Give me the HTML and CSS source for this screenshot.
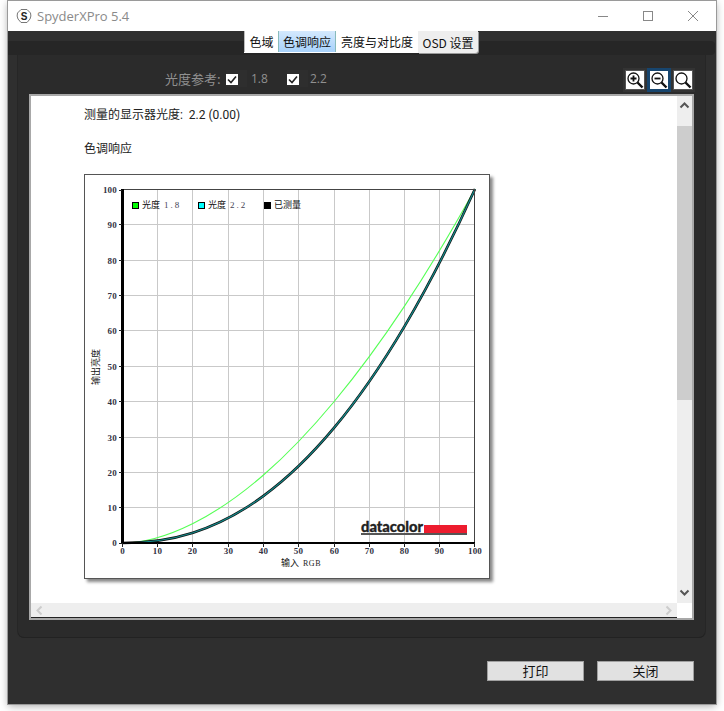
FILE: index.html
```html
<!DOCTYPE html>
<html lang="zh">
<head>
<meta charset="utf-8">
<title>SpyderXPro 5.4</title>
<link rel="stylesheet" href="styles.css">
</head>
<body>
<div class="window">
  <header class="titlebar">
    <svg class="app-icon" width="16" height="16" viewBox="0 0 16 16"><path d="M5 1.500h6l3.500 3.500q1 3-.5 6l-3 3.500H5l-3-3.500q-1.500-3-.5-6z" fill="none" stroke="#777" stroke-width="1"/><text x="8" y="12" class="app-s">S</text></svg>
    <span class="app-title">SpyderXPro 5.4</span>
    <div class="win-controls">
      <svg width="12" height="12" viewBox="0 0 12 12"><path d="M1 6.500h10" stroke="#888" stroke-width="1"/></svg>
      <svg width="12" height="12" viewBox="0 0 12 12"><rect x="1.500" y="1.500" width="9" height="9" fill="none" stroke="#888"/></svg>
      <svg width="12" height="12" viewBox="0 0 12 12"><path d="M1 1l10 10M11 1L1 11" stroke="#888" stroke-width="1" fill="none"/></svg>
    </div>
  </header>

  <div class="tabstrip">
    <nav class="tabs">
      <span class="tab">色域</span>
      <span class="tab tab-active">色调响应</span>
      <span class="tab">亮度与对比度</span>
      <span class="tab tab-last">OSD 设置</span>
    </nav>
  </div>

  <main class="panel">
    <div class="toolrow">
      <div class="gamma-refs">
        <span class="gamma-label">光度参考:</span>
        <span class="check"><svg width="12" height="11" viewBox="0 0 12 11"><rect width="12" height="11" fill="#fff"/><path d="M2 5.500l3 3 5-6" fill="none" stroke="#222" stroke-width="1.600"/></svg></span>
        <span class="gamma-value">1.8</span>
        <span class="check"><svg width="12" height="11" viewBox="0 0 12 11"><rect width="12" height="11" fill="#fff"/><path d="M2 5.500l3 3 5-6" fill="none" stroke="#222" stroke-width="1.600"/></svg></span>
        <span class="gamma-value">2.2</span>
      </div>
      <div class="zoom-tools">
        <span class="zoom-btn"><svg width="18" height="18" viewBox="0 0 18 18"><circle cx="7.500" cy="7.500" r="5.500" fill="none" stroke="#111" stroke-width="1.300"/><path d="M11.500 11.500l5 5" stroke="#111" stroke-width="2.400"/><path d="M4.500 7.500h6M7.500 4.500v6" stroke="#111" stroke-width="1.800"/></svg></span>
        <span class="zoom-btn zoom-btn-on"><svg width="18" height="18" viewBox="0 0 18 18"><circle cx="7.500" cy="7.500" r="5.500" fill="none" stroke="#111" stroke-width="1.300"/><path d="M11.500 11.500l5 5" stroke="#111" stroke-width="2.400"/><path d="M4.500 7.500h6" stroke="#111" stroke-width="1.800"/></svg></span>
        <span class="zoom-btn"><svg width="18" height="18" viewBox="0 0 18 18"><circle cx="7.500" cy="7.500" r="5.500" fill="none" stroke="#111" stroke-width="1.300"/><path d="M11.500 11.500l5 5" stroke="#111" stroke-width="2.400"/></svg></span>
      </div>
    </div>

    <section class="viewer">
      <div class="report">
        <p class="report-line">测量的显示器光度:&nbsp; 2.2 (0.00)</p>
        <p class="report-line report-heading">色调响应</p>
        <div class="chart-card">
          <svg class="chart" width="404" height="403" viewBox="85 175 404 403">
            <g class="grid">
              <path d="M157.500 190V543M192.500 190V543M228.500 190V543M263.500 190V543M298.500 190V543M334.500 190V543M369.500 190V543M404.500 190V543M439.500 190V543"/>
              <path d="M122 224.500H475M122 260.500H475M122 295.500H475M122 330.500H475M122 366.500H475M122 401.500H475M122 437.500H475M122 472.500H475M122 507.500H475"/>
            </g>
            <g class="logo">
              <text x="361" y="532" class="logo-text" textLength="62" lengthAdjust="spacingAndGlyphs">datacolor</text>
              <rect x="424" y="525" width="43" height="8" fill="#ed1c2e"/>
              <rect x="361" y="533" width="106" height="2" fill="#555"/>
            </g>
            <g transform="translate(122.500 543) scale(3.525 -3.54)">
              <path class="c-18" d="M0 0C6.670 0 13.330 2.210 20 5.520C26.670 8.830 33.330 13.440 40 19.200C46.670 24.960 53.330 31.920 60 39.900C66.670 47.880 73.330 56.860 80 66.900C86.670 76.940 93.330 88 100 100"/>
              <path class="c-meas" d="M0 0C6.670 0 13.330 .77 20 2.900C26.670 5.030 33.330 8.410 40 13.300C46.670 18.190 53.330 24.550 60 32.500C66.670 40.450 73.330 49.970 80 61.200C86.670 72.430 93.330 85.330 100 100"/>
              <path class="c-22" d="M0 0C6.670 0 13.330 .77 20 2.900C26.670 5.030 33.330 8.410 40 13.300C46.670 18.190 53.330 24.550 60 32.500C66.670 40.450 73.330 49.970 80 61.200C86.670 72.430 93.330 85.330 100 100"/>
            </g>
            <g class="axes">
              <path class="ax-thin" d="M122 189.500H475M474.500 189V543"/>
              <path class="ax-thick-v" d="M122.500 189V544"/>
              <path class="ax-thick-h" d="M122 543H475"/>
              <path class="ticks" d="M119 190.500h3M119 224.500h3M119 260.500h3M119 295.500h3M119 330.500h3M119 366.500h3M119 401.500h3M119 437.500h3M119 472.500h3M119 507.500h3M119 543.500h3M122.500 543v4M157.500 543v4M192.500 543v4M228.500 543v4M263.500 543v4M298.500 543v4M334.500 543v4M369.500 543v4M404.500 543v4M439.500 543v4M474.500 543v4"/>
            </g>
            <g class="ylab">
              <text x="117" y="193">100</text><text x="117" y="228">90</text><text x="117" y="264">80</text><text x="117" y="299">70</text><text x="117" y="334">60</text><text x="117" y="370">50</text><text x="117" y="405">40</text><text x="117" y="441">30</text><text x="117" y="476">20</text><text x="117" y="511">10</text><text x="117" y="546">0</text>
            </g>
            <g class="xlab">
              <text x="122.500" y="554">0</text><text x="157.500" y="554">10</text><text x="192.500" y="554">20</text><text x="228.500" y="554">30</text><text x="263.500" y="554">40</text><text x="298.500" y="554">50</text><text x="334.500" y="554">60</text><text x="369.500" y="554">70</text><text x="404.500" y="554">80</text><text x="439.500" y="554">90</text><text x="475" y="554">100</text>
            </g>
            <g class="legend">
              <rect x="132.500" y="202.500" width="6" height="6" fill="#0f0" stroke="#000"/>
              <text x="142" y="208">光度<tspan class="lg-num" dx="4">1.8</tspan></text>
              <rect x="198.500" y="202.500" width="6" height="6" fill="#0ff" stroke="#000"/>
              <text x="208" y="208">光度<tspan class="lg-num" dx="4">2.2</tspan></text>
              <rect x="264.500" y="202.500" width="6" height="6" fill="#000" stroke="#000"/>
              <text x="274" y="208">已测量</text>
            </g>
            <text class="axis-title" x="281" y="566">输入<tspan class="rgb" dx="4">RGB</tspan></text>
            <text class="axis-title" transform="translate(99 385) rotate(-90)">输出亮度</text>
          </svg>
        </div>
      </div>
      <div class="vscroll">
        <svg class="chev" width="15" height="30" viewBox="0 0 15 30"><path d="M3.500 11.500l4-4 4 4" fill="none" stroke="#555" stroke-width="2"/></svg>
        <div class="vthumb"></div>
        <div class="vtrack"></div>
        <svg class="chev" width="15" height="18" viewBox="0 0 15 18"><path d="M3.500 5.500l4 4 4-4" fill="none" stroke="#555" stroke-width="2"/></svg>
      </div>
      <div class="hscroll">
        <svg width="15" height="15" viewBox="0 0 15 15"><path d="M9.500 3.500l-4 4 4 4" fill="none" stroke="#ccc" stroke-width="2"/></svg>
        <svg width="15" height="15" viewBox="0 0 15 15"><path d="M5.500 3.500l4 4-4 4" fill="none" stroke="#ccc" stroke-width="2"/></svg>
      </div>
      <div class="corner"></div>
    </section>
  </main>

  <footer class="actions">
    <button class="btn" type="button">打印</button>
    <button class="btn" type="button">关闭</button>
  </footer>
</div>
</body>
</html>
```

FILE: styles.css
```css
html, body { margin: 0; padding: 0; }
body {
  width: 724px;
  height: 711px;
  background: #fff;
  padding: 1px 0 0 8px;
  box-sizing: border-box;
  overflow: hidden;
  font-family: "Noto Sans CJK SC", "Liberation Sans", sans-serif;
}
.window {
  width: 708px;
  height: 703px;
  display: flex;
  flex-direction: column;
  background: #2f2f2f;
  box-shadow: 0 0 0 1px #9a9a9a, 0 2px 8px rgba(0,0,0,.35);
}
.titlebar {
  height: 30px;
  flex: none;
  display: flex;
  align-items: center;
  background: #fff;
  padding-left: 8px;
}
.app-icon { flex: none; margin-right: 5px; }
.app-s { font: bold 10px "Liberation Sans", sans-serif; fill: #222; text-anchor: middle; }
.app-title { font: 13px "Open Sans", sans-serif; color: #8a8a8a; }
.win-controls {
  margin-left: auto;
  display: flex;
  gap: 33px;
  padding-right: 17px;
}
.tabstrip {
  position: relative;
  height: 24px;
  flex: none;
}
.tabstrip::before {
  content: "";
  position: absolute;
  left: 0;
  right: 1px;
  top: 10px;
  height: 14px;
  background: #262626;
  border-radius: 0 4px 4px 0;
}
.tabs {
  position: relative;
  display: flex;
  margin-left: 236px;
  height: 22px;
  width: 234px;
  border-bottom: 2px solid #fff;
  box-sizing: border-box;
}
.tab {
  display: flex;
  align-items: center;
  justify-content: center;
  box-sizing: border-box;
  background: #fff;
  font-size: 12px;
  color: #111;
  white-space: nowrap;
  height: 21px;
  flex: none;
}
.tab:nth-child(1) { width: 34px; border-left: 1px solid #bbb; }
.tab-active { width: 58px; background: linear-gradient(#d4e9fd, #a8d2fb); border-left: 1px solid #8bb; border-right: 1px solid #8bb; }
.tab:nth-child(3) { width: 82px; }
.tab-last { width: 60px; background: #eee; border-radius: 0 0 3px 0; box-shadow: 1px 1px 0 #999; height: 22px; margin-bottom: -2px; }
.panel {
  margin: 0 11px 0 10px;
  height: 582px;
  flex: none;
  box-sizing: border-box;
  padding: 13px 11px 17px;
  background: #2b2b2b;
  border-radius: 0 0 6px 6px;
  box-shadow: 0 1px 0 #222, 0 0 0 1px #262626;
  display: flex;
  flex-direction: column;
}
.toolrow {
  height: 26px;
  flex: none;
  display: flex;
  align-items: flex-start;
  justify-content: space-between;
}
.gamma-refs {
  display: flex;
  align-items: center;
  height: 20px;
  padding-left: 136px;
  color: #909090;
  font-size: 13px;
}
.gamma-label { width: 61px; flex: none; white-space: nowrap; }
.check {
  width: 21px;
  height: 17px;
  flex: none;
  background: #2e2e2e;
  display: flex;
  padding: 4px 0 0 0;
  box-sizing: border-box;
}
.check svg { display: block; }
.gamma-value { font: 12px "Open Sans", sans-serif; width: 40px; padding-left: 4px; box-sizing: border-box; flex: none; }
.gamma-value:last-child { width: auto; padding-left: 2px; }
.zoom-tools {
  display: flex;
  align-items: center;
  gap: 6px;
  height: 24px;
  width: 72px;
  margin-right: -1px;
  padding: 0 3px;
  box-sizing: border-box;
  background: #333;
}
.zoom-btn {
  width: 18px;
  height: 18px;
  flex: none;
  background: #fff;
  outline: 1px solid #555;
  display: block;
}
.zoom-btn svg { display: block; }
.zoom-btn-on { outline: 3px solid #17456e; }
.viewer {
  flex: 1;
  min-height: 0;
  display: grid;
  grid-template-columns: 1fr 15px;
  grid-template-rows: 1fr 15px;
  background: #fff;
  border: 2px solid #a8a8a8;
  box-sizing: border-box;
  overflow: hidden;
}
.report { padding: 10px 0 0 53px; overflow: hidden; min-width: 0; }
.report-line { margin: 0; font-size: 12px; line-height: 18px; color: #222; font-family: Roboto, "Noto Sans CJK SC", sans-serif; }
.report-heading { margin-top: 16px; }
.chart-card {
  width: 404px;
  height: 403px;
  margin-top: 16px;
  border: 1px solid #555;
  box-shadow: 3px 3px 3px #888;
  background: #fff;
}
.chart { display: block; }
.grid path { stroke: #c9c9c9; stroke-width: 1; fill: none; }
.c-18 { fill: none; stroke: #55ff55; stroke-width: 1.100; vector-effect: non-scaling-stroke; }
.c-meas { fill: none; stroke: #111; stroke-width: 2.600; vector-effect: non-scaling-stroke; }
.c-22 { fill: none; stroke: #138a8a; stroke-width: 1.200; vector-effect: non-scaling-stroke; }
.ax-thin { stroke: #444; stroke-width: 1; fill: none; }
.ax-thick-v { stroke: #000; stroke-width: 3; fill: none; }
.ax-thick-h { stroke: #000; stroke-width: 2; fill: none; }
.ticks { stroke: #222; stroke-width: 1; fill: none; }
.ylab text, .xlab text { font: bold 9px "Liberation Serif", serif; fill: #334; letter-spacing: .2px; }
.ylab text { text-anchor: end; }
.xlab text { text-anchor: middle; }
.legend text, .axis-title { font: 9px "Noto Sans CJK SC", sans-serif; fill: #111; }
.lg-num { font: 9px "Liberation Serif", serif; fill: #445; letter-spacing: 2px; }
.rgb { font: 8px "Liberation Serif", serif; fill: #222; letter-spacing: .5px; }
.logo-text { font: 900 15px Lato, "Liberation Sans", sans-serif; fill: #222; stroke: #222; stroke-width: .3; }
.vscroll {
  display: flex;
  flex-direction: column;
  background: #eee;
}
.vscroll .chev { display: block; flex: none; }
.vthumb { height: 274px; background: #cdcdcd; flex: none; }
.vtrack { flex: 1; }
.hscroll {
  display: flex;
  justify-content: space-between;
  align-items: center;
  background: #eee;
  padding: 0 1px;
  border-bottom: 1px solid #222;
}
.hscroll svg { display: block; }
.corner { background: #fff; }
.actions {
  flex: 1;
  display: flex;
  justify-content: flex-end;
  align-items: flex-start;
  gap: 13px;
  padding: 24px 22px 0 0;
}
.btn {
  width: 97px;
  height: 20px;
  padding: 0;
  background: #e1e1e1;
  border: 1px solid #a0a0a0;
  color: #111;
  font: 13px "Noto Sans CJK SC", sans-serif;
  line-height: 18px;
}
```
